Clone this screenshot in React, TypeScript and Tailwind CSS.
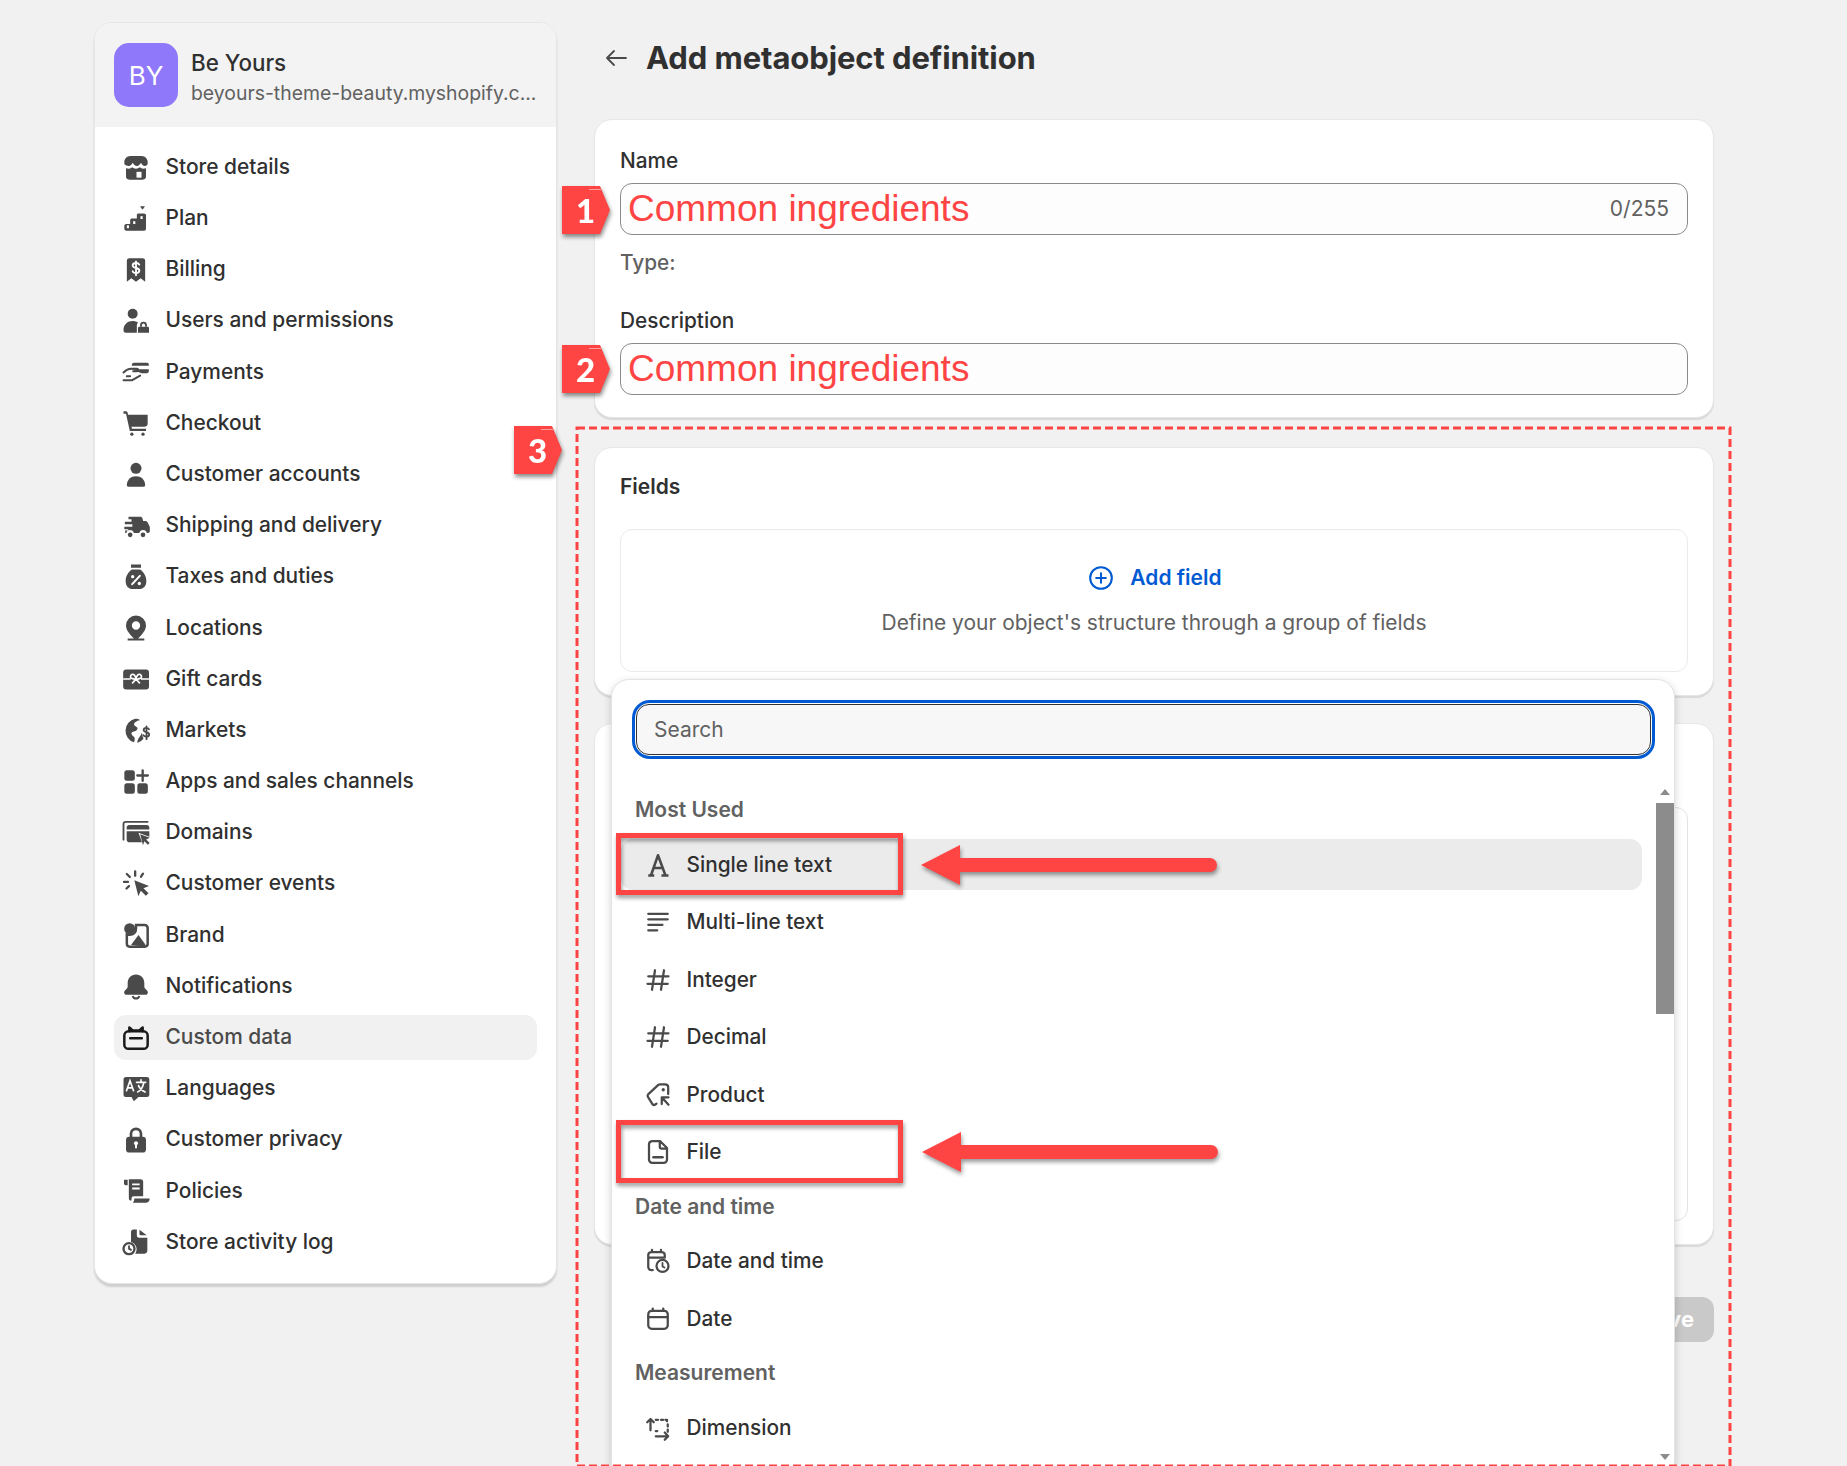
import React from "react";

const W = "#fff";
type IconProps = { children: React.ReactNode; className?: string; viewBox?: string };
const Svg = ({ children, className = "text-[#4a4a4a]", viewBox = "0 0 20 20" }: IconProps) => (
  <svg viewBox={viewBox} fill="currentColor" className={`w-[30px] h-[30px] shrink-0 ${className}`}>
    {children}
  </svg>
);
const S = { fill: "none", stroke: "currentColor", strokeWidth: 1.5, strokeLinecap: "round" as const, strokeLinejoin: "round" as const };

const navIcons: Record<string, React.ReactNode> = {
  "Store details": (
    <>
      <path d="M6.500 2.800h7c1.800 0 3.500 1.700 3.500 3.500v1c0 1-.8 1.500-1.700 1.500-1 0-1.800-.7-2.300-1.900-.6 1.200-1.500 1.900-2.500 1.900s-1.900-.7-2.500-1.900C7.500 8.100 6.700 8.800 5.700 8.800 4.800 8.800 3 8.300 3 7.300v-1c0-1.800 1.700-3.500 3.500-3.500z" />
      <path d="M4 10.200c.5.200 1 .2 1.600.2 .9 0 1.600-.3 2.100-.8.600.5 1.400.8 2.300.8s1.700-.3 2.300-.8c.5.500 1.200.8 2.100.8.600 0 1.100 0 1.600-.2V15a2 2 0 0 1-2 2H6a2 2 0 0 1-2-2z" />
      <rect x="10.300" y="12.300" width="3" height="3.500" fill={W} />
    </>
  ),
  Plan: (
    <>
      <path d="M12.400 2.400h3l-1.500 2z" />
      <path d="M3 14.200c0-.7.500-1.200 1.200-1.200h2.300v-2.200c0-.7.500-1.100 1.100-1.100h2.900V7.800c0-.7.500-1.100 1.100-1.100h3.200c.7 0 1.200.5 1.200 1.100v8c0 .7-.5 1.200-1.200 1.200H4.200C3.500 17 3 16.500 3 15.800z" />
      <rect x="4.500" y="13.800" width="1.300" height="1.700" fill={W} />
      <rect x="8.300" y="11.300" width="1.300" height="1.700" fill={W} />
      <rect x="12.700" y="8.300" width="1.300" height="1.700" fill={W} />
    </>
  ),
  Billing: (
    <>
      <path d="M6 3h8a1.500 1.500 0 0 1 1.500 1.500V17l-2.700-2-2.800 2-2.800-2-2.700 2V4.500A1.500 1.500 0 0 1 6 3z" />
      <path d="M12 6.800c-.3-.6-1.100-1-2-1-1.200 0-2 .6-2 1.500 0 2 4 1 4 3 0 .9-.9 1.500-2 1.500-1 0-1.800-.4-2-1.100M10 4.800v8.400" fill="none" stroke={W} strokeWidth="1.100" strokeLinecap="round" />
    </>
  ),
  "Users and permissions": (
    <>
      <circle cx="8" cy="5.700" r="3" />
      <path d="M2.500 15.500C2.500 12 5 10 8 10c1.200 0 2.300.3 3.200.9-.5.500-.7 1.200-.7 1.900V17H4a1.500 1.500 0 0 1-1.500-1.500z" />
      <path d="M12 13.500h5a.8.8 0 0 1 .8.8V17h-6.600v-2.700a.8.800 0 0 1 .8-.8z" />
      <path d="M13 13.500v-1a1.500 1.500 0 0 1 3 0v1" fill="none" stroke="currentColor" strokeWidth="1.100" />
    </>
  ),
  Payments: (
    <>
      <path d="M7.500 5.800c0-.9.600-1.300 1.300-1.300h7.700c.7 0 1.200.4 1.200 1v.8H7.500z" />
      <path d="M7.200 8.300h10.500v1.300c0 .7-.5 1.100-1.200 1.100h-3.200z" />
      <path d="M2.500 10.300c1.800-1.700 3-2.200 4.500-2.200h3.500c1 0 1.200 1.400 0 1.500H8.300M2.500 15h5l5-2.800" {...S} strokeWidth="1.200" />
      <path d="M4.500 12.600l2-.1" {...S} strokeWidth="1.200" />
    </>
  ),
  Checkout: (
    <>
      <path d="M2.500 3h1.300c.6 0 1 .3 1.200.9L5.200 5H17v5.500c0 1-.7 1.700-1.700 1.700H7.300l.2 1.300H16v1.300H6.300L4 4.500H2.500z" />
      <circle cx="7.500" cy="16.700" r="1" />
      <circle cx="14.200" cy="16.700" r="1" />
    </>
  ),
  "Customer accounts": (
    <>
      <circle cx="10" cy="6" r="3.300" />
      <path d="M4.500 16.200c0-3.400 2.500-5.400 5.500-5.400s5.500 2 5.500 5.400c0 .5-.4.800-.8.800H5.300c-.4 0-.8-.3-.8-.8z" />
    </>
  ),
  "Shipping and delivery": (
    <>
      <path d="M5.500 4.500h7c.7 0 1.200.4 1.400 1l.4 1.500h1.200c.7 0 1.300.4 1.600 1l1 2.200c.2.300.2.600.2.900v1.900c0 .7-.5 1.200-1.200 1.200h-.6a2.300 2.300 0 0 0-4.500 0H8.700a2.300 2.300 0 0 0-4.500 0H3.500v-1.500h1.800V12H3V10.500h4.800V9H3.300V7.500h4V6H5.500z" />
      <circle cx="6.500" cy="15.300" r="1.400" />
      <circle cx="14.200" cy="15.300" r="1.400" />
    </>
  ),
  "Taxes and duties": (
    <>
      <path d="M7 2.500h6v2H7zM7.500 5.500h5c2.200 1.500 3.700 4 3.700 7 0 2.800-1.700 4.700-4.200 4.700H8c-2.500 0-4.200-1.900-4.200-4.700 0-3 1.500-5.500 3.700-7z" />
      <path d="M12.300 9.300l-4.600 5" stroke={W} strokeWidth="1.200" strokeLinecap="round" />
      <circle cx="8" cy="9.800" r="1" fill={W} />
      <circle cx="12" cy="13.900" r="1" fill={W} />
    </>
  ),
  Locations: (
    <path fillRule="evenodd" d="M10 2.500a6 6 0 0 1 6 6c0 3-2.700 5.800-4.800 7.800H15v1.200H5v-1.200h3.800C6.700 14.300 4 11.500 4 8.500a6 6 0 0 1 6-6zm0 3.500a2.500 2.500 0 1 0 0 5 2.500 2.500 0 0 0 0-5z" />
  ),
  "Gift cards": (
    <>
      <rect x="2.300" y="4.300" width="15.500" height="12" rx="1.800" />
      <path d="M2.300 10h4.500M13 10h5M7.500 7.300c1-.6 2.300.8 2.500 2.700-1.800.2-3.500-.4-3.300-1.500.1-.6.400-1 .8-1.200zM12.500 7.300c-1-.6-2.300.8-2.500 2.700 1.800.2 3.500-.4 3.300-1.500-.1-.6-.4-1-.8-1.200zM10 10l-2.300 2.600M10 10l2.300 2.600" fill="none" stroke={W} strokeWidth="1" />
    </>
  ),
  Markets: (
    <>
      <path d="M9.500 2.700c1.100 0 2.200.3 3.100.8-1.600.1-3.500 1-3.700 2.300-.2 1.200 1.100 1.300 1.700 2 .6.600.2 1.500-.5 2-.9.600-3 .4-2.800 1.900.1 1 1.300 1.300 1.700 2.100.5.900.2 2.100-.2 3A7.300 7.300 0 0 1 9.500 2.700zM13.500 11c.2 1.400.6 2.600 1 3.700a7.300 7.300 0 0 1-3.700 2.500c0-1.500.4-2.300 1-3.200.5-.8 1.200-1.600 1.700-3z" />
      <path d="M17.800 8.900c-.3-.5-.9-.8-1.600-.8-.9 0-1.600.5-1.600 1.300 0 1.600 3.300 1 3.300 2.700 0 .8-.8 1.300-1.700 1.300-.8 0-1.500-.3-1.800-.9M16.300 7.300v7.600" fill="none" stroke="currentColor" strokeWidth="1.100" strokeLinecap="round" />
    </>
  ),
  "Apps and sales channels": (
    <>
      <rect x="3" y="3" width="6.300" height="6.300" rx="1.500" />
      <rect x="3" y="10.800" width="6.300" height="6.300" rx="1.500" />
      <rect x="10.800" y="10.800" width="6.300" height="6.300" rx="1.500" />
      <path d="M14 3v6.300M10.800 6.100h6.300" stroke="currentColor" strokeWidth="1.400" strokeLinecap="round" />
    </>
  ),
  Domains: (
    <>
      <path d="M17 3.300H3.800a1.300 1.300 0 0 0-1.300 1.300V14" {...S} strokeWidth="1.100" />
      <path d="M4.400 6.900A1.700 1.700 0 0 1 6.100 5.200h10.200A1.700 1.700 0 0 1 18 6.900v1H4.400z" />
      <path d="M4.400 8.900H18v3.300l-6.500-2.400 2.100 5.800H6.100a1.700 1.700 0 0 1-1.700-1.700z" />
      <path d="M12.500 10.700l5.800 2.200-2.200 1 2.100 2.100-1.100 1.100-2.100-2.100-.8 2.300z" />
    </>
  ),
  "Customer events": (
    <>
      <path d="M9 7.700l8.800 3.500-3.300 1.400 3 3-1.600 1.500-3-3-1.500 3.300z" />
      <path d="M9.500 2.500v2.500M4.500 4l1.800 1.800M14.200 3.800l-1.200 1.800M2.800 8.700h2.400M5.800 11.300l-1.500 1.400" {...S} strokeWidth="1.400" />
    </>
  ),
  Brand: (
    <>
      <circle cx="6.200" cy="6.200" r="3.300" />
      <path d="M10 4h5.200c1 0 1.800.8 1.800 1.800v9.500c0 1-.8 1.700-1.800 1.700H6.200c-1 0-1.700-.7-1.700-1.700V9.600c.5.200 1 .3 1.700.3 2.300 0 3.800-1.600 3.800-3.700z" fill="none" stroke="currentColor" strokeWidth="1.500" />
      <path d="M7 16l4.500-6 4 5.500v1.500z" />
    </>
  ),
  Notifications: (
    <>
      <path d="M10 2.500c3 0 5 2.300 5 5.200v2c0 .8.500 1.400 1.200 2 .7.600.9 1.100.9 1.600 0 .8-.7 1.400-1.500 1.400H4.400c-.8 0-1.500-.6-1.500-1.400 0-.5.200-1 .9-1.600.7-.6 1.200-1.200 1.200-2v-2c0-2.900 2-5.200 5-5.200z" />
      <path d="M8 15.500a2.100 2.100 0 0 0 4 0" fill="none" stroke="currentColor" strokeWidth="1.200" />
    </>
  ),
  "Custom data": (
    <>
      <rect x="3" y="6" width="14" height="10.500" rx="2.500" fill="none" stroke="#1a1a1a" strokeWidth="1.500" />
      <path d="M6 6V3.700l2 1.800M14 6V3.700l-2 1.800M8 5.500h4M6.500 10.200h7" fill="none" stroke="#1a1a1a" strokeWidth="1.500" strokeLinecap="round" strokeLinejoin="round" />
    </>
  ),
  Languages: (
    <>
      <path d="M4 2.800h12.500A1.500 1.500 0 0 1 18 4.300v9a1.500 1.500 0 0 1-1.500 1.500h-5L8.700 17.300 7.300 14.800H4a1.500 1.500 0 0 1-1.500-1.500v-9A1.500 1.500 0 0 1 4 2.800z" />
      <path d="M4.300 11l2.100-6 2.100 6M5 9.300h2.800M10.300 6h5.500M13 4.500V6M11 11.800c2-1 3.200-3 3.700-5.800M11.500 8c.7 1.800 2 3 4 3.800" fill="none" stroke={W} strokeWidth="1" strokeLinecap="round" />
    </>
  ),
  "Customer privacy": (
    <>
      <path d="M7 8.500V6.300a3 3 0 0 1 6 0v2.200" fill="none" stroke="currentColor" strokeWidth="1.600" />
      <rect x="4" y="8" width="12" height="9.500" rx="2" />
      <circle cx="10" cy="12" r="1.200" fill={W} />
      <path d="M10 12.500v2" stroke={W} strokeWidth="1.200" strokeLinecap="round" />
    </>
  ),
  Policies: (
    <>
      <path d="M2.800 3.200h2.200v3.300H3.800A1 1 0 0 1 2.800 5.500z" />
      <path d="M5.700 3h7.100c.9 0 1.500.7 1.500 1.500v8.700H8.800c-1 0-1.500.5-1.500 1.500v1h-.3c-.8 0-1.300-.6-1.300-1.400z" />
      <path d="M9 14.500h9.200c0 1.500-.8 2.500-2 2.500H8c.7-.5 1-1.500 1-2.500z" />
      <path d="M7.700 6h4.500M7.700 8.500h4.500" stroke={W} strokeWidth="1.100" />
    </>
  ),
  "Store activity log": (
    <>
      <path d="M7 4a1.500 1.500 0 0 1 1.500-1.500h2V6a1.500 1.500 0 0 0 1.500 1.500h4.800v7.800c0 .9-.7 1.700-1.700 1.700H9.500a4.500 4.500 0 0 0-2.500-7z" />
      <path d="M12.100 2.700l4.300 3.300h-3.700a.6.6 0 0 1-.6-.6z" />
      <circle cx="5.800" cy="14" r="3.300" fill="none" stroke="currentColor" strokeWidth="1.400" />
      <path d="M5.800 12.500V14l1.200.7" fill="none" stroke="currentColor" strokeWidth="1.100" strokeLinecap="round" />
    </>
  ),
};

const navItems = Object.keys(navIcons);

const fieldIcons: Record<string, React.ReactNode> = {
  "Single line text": <path d="M3.500 17h4M12.300 17h4.700M5.300 17L10 3.500 15 17M7 12h6" {...S} strokeWidth="1.700" strokeLinecap="butt" />,
  "Multi-line text": <path d="M3.500 4.500h13M3.500 8.200h13M3.500 11.900h9.500M3.500 15.500h6" {...S} strokeWidth="1.500" />,
  Integer: <path d="M8 3.500L6 16.500M14 3.500l-2 13M3.500 7.500h13.500M3 12.500h13.500" {...S} />,
  Decimal: <path d="M8 3.500L6 16.500M14 3.500l-2 13M3.500 7.500h13.500M3 12.500h13.500" {...S} />,
  Product: (
    <>
      <path d="M9 15.800l-1 .7c-.6.300-1.200.200-1.600-.3L3.300 11.300c-.4-.6-.3-1.200.1-1.700l6.800-6.300c.4-.3.700-.4 1.200-.4h3.300c1.200 0 2.100.8 2.100 2v4.500" {...S} />
      <circle cx="13.500" cy="6.500" r="1.100" />
      <path d="M12.500 11.500L12.500 16M12.500 11.500H17M12.700 11.700L17 16.500" {...S} />
    </>
  ),
  File: (
    <>
      <path d="M6 2.800h5.500L16 7.300V15a2.200 2.200 0 0 1-2.200 2.200H6.200A2.200 2.200 0 0 1 4 15V5a2.200 2.200 0 0 1 2-2.200zM11.200 3v3.500c0 .7.500 1.200 1.200 1.200H16" {...S} />
      <path d="M7 13.500h6" {...S} strokeWidth="1.800" />
    </>
  ),
  "Date and time": (
    <>
      <path d="M6.500 16H5.500A2 2 0 0 1 3.500 14V6a2 2 0 0 1 2-2h7a2 2 0 0 1 2 2v1.500M3.500 7.800h11M6 4V2.500M12 4V2.500" {...S} />
      <circle cx="13" cy="13.300" r="4" {...S} />
      <path d="M13 11.300v2.300l1.300.8" {...S} strokeWidth="1.200" />
    </>
  ),
  Date: (
    <>
      <rect x="3.500" y="4.500" width="13" height="12" rx="2.300" {...S} />
      <path d="M3.500 8.700h13M6.500 4.500V3M13.500 4.500V3" {...S} />
    </>
  ),
  Dimension: (
    <>
      <path d="M5 11.500V4M2.800 6.200L5 4l2.200 2.200M8.500 15.500h8M14.500 13l2.300 2.500-2.300 2.300" {...S} />
      <path d="M8.500 4.500h1.500M12 4.500h1.500M15 4.500h1v1M16.500 7.500v1.500M16.500 11v1.500M8.500 12h1" {...S} />
    </>
  ),
};

function FieldRow({ label, active }: { label: string; active?: boolean }) {
  return (
    <div className={`flex items-center h-[51px] pl-[22px] gap-[13.500px] rounded-[12px] text-[20.800px] font-[450] text-[#303030] ${active ? "bg-[#ebebeb]" : ""}`}>
      <Svg className="text-[#4a4a4a]">{fieldIcons[label]}</Svg>
      <span className="-translate-y-[0.500px]">{label}</span>
    </div>
  );
}

function Section({ title, items, activeFirst }: { title: string; items: string[]; activeFirst?: boolean }) {
  return (
    <div className="mb-[14px]">
      <div className="h-[30px] mb-[14px] pl-[14px] flex items-center text-[21px] font-semibold text-[#616161]">{title}</div>
      <div className="flex flex-col gap-[6.500px]">
        {items.map((i, idx) => (
          <FieldRow key={i} label={i} active={activeFirst && idx === 0} />
        ))}
      </div>
    </div>
  );
}

function Badge({ n, className }: { n: string; className: string }) {
  return (
    <div className={`absolute w-[48px] h-[48px] drop-shadow-[1px_3px_2px_rgba(0,0,0,0.45)] ${className}`}>
      <div className="relative w-full h-full bg-[#ff4444] [clip-path:polygon(0_0,38px_0,48px_24px,38px_48px,0_48px)] flex items-center pl-[14px]">
        <span className="text-white text-[33px] font-black leading-none font-['Lato',sans-serif]">{n}</span>
        <div className="absolute left-[27px] top-[3px] w-[12px] h-[1px] bg-[#ff9d9d]" />
      </div>
    </div>
  );
}

function Arrow({ className }: { className: string }) {
  return (
    <svg viewBox="0 0 299 44" className={`absolute w-[299px] h-[44px] drop-shadow-[1px_3px_2px_rgba(0,0,0,0.4)] ${className}`}>
      <path d="M0 22L39 2V15H289a7 7 0 0 1 0 14H39V42z" fill="#ff4444" />
    </svg>
  );
}

function Card({ className, children }: { className: string; children?: React.ReactNode }) {
  return (
    <div className={`bg-white rounded-[18px] border border-[#e6e6e6] shadow-[0_2px_1px_rgba(0,0,0,0.1)] px-[25px] ${className}`}>{children}</div>
  );
}

const RedText = () => (
  <span className="text-[37px] text-[#ff4444] font-['Liberation_Sans',sans-serif] leading-none -translate-y-[1px]">Common ingredients</span>
);

export default function App() {
  return (
    <div className="relative h-[1466px] overflow-hidden bg-[#f1f1f1] font-['Inter',sans-serif] text-[#303030] pl-[94px] pt-[22px] flex gap-[37px] items-start">
      <aside className="w-[463px] shrink-0 bg-white rounded-[18px] border border-[#e6e6e6] shadow-[0_3px_2px_rgba(0,0,0,0.14)] overflow-hidden">
        <div className="h-[104px] bg-[#f3f3f3] flex items-center px-[19px] gap-[13px]">
          <div className="w-[64px] h-[64px] rounded-[15px] bg-[#8f78fa] text-white text-[26px] flex items-center justify-center shrink-0 pt-[1px]">BY</div>
          <div className="min-w-0 flex-1 pt-[5px]">
            <div className="text-[22.400px] font-medium text-[#303030] leading-[31px]">Be Yours</div>
            <div className="text-[19.400px] text-[#616161] leading-[31px] whitespace-nowrap">beyours-theme-beauty.myshopify.c...</div>
          </div>
        </div>
        <nav className="flex flex-col gap-[6.190px] px-[19px] py-[18px]">
          {navItems.map((n) => (
            <div key={n} className={`flex items-center h-[45px] pl-[7px] gap-[14.500px] rounded-[12px] text-[20.900px] font-[450] ${n === "Custom data" ? "bg-[#f1f1f1] text-[#4a4a4a]" : "text-[#303030]"}`}>
              <Svg viewBox="1 1 18 18">{navIcons[n]}</Svg>
              <span className="-translate-y-[1px]">{n}</span>
            </div>
          ))}
        </nav>
      </aside>

      <main className="w-[1120px] shrink-0">
        <div className="h-[72px] mb-[25px] flex items-center">
          <svg viewBox="0 0 24 24" className="w-[24px] h-[24px] ml-[10px] mr-[18px] text-[#4a4a4a]" fill="none" stroke="currentColor" strokeWidth="1.800" strokeLinecap="round" strokeLinejoin="round">
            <path d="M22 12H3M10 5l-7 7 7 7" />
          </svg>
          <h1 className="text-[31px] font-bold text-[#303030] tracking-[-0.1px]">Add metaobject definition</h1>
        </div>

        <Card className="h-[299px] pt-[25px] mb-[29px]">
          <div className="h-[30px] mb-[8px] flex items-center text-[20.800px] font-[450] translate-y-[1px]">Name</div>
          <div className="h-[52px] rounded-[12px] border border-[#8a8a8a] bg-[#fdfdfd] flex items-center justify-between pl-[7px] pr-[18px]">
            <RedText />
            <span className="text-[21px] text-[#616161]">0/255</span>
          </div>
          <div className="h-[30px] mt-[13px] flex items-center text-[20.800px] font-[450] text-[#616161]">Type:</div>
          <div className="h-[30px] mt-[27px] mb-[8px] flex items-center text-[20.800px] font-[450] translate-y-[1px]">Description</div>
          <div className="h-[52px] rounded-[12px] border border-[#8a8a8a] bg-[#fdfdfd] flex items-center pl-[7px]">
            <RedText />
          </div>
        </Card>

        <Card className="h-[249px] pt-[24px] mb-[27px]">
          <div className="h-[30px] mb-[27px] flex items-center text-[21px] font-semibold">Fields</div>
          <div className="h-[143px] rounded-[12px] border border-[#ebebeb] flex flex-col items-center pt-[33px]">
            <div className="flex items-center gap-[14px] h-[30px] text-[21px] font-semibold text-[#005bd3]">
              <svg viewBox="0 0 20 20" className="w-[30px] h-[30px]" fill="none" stroke="currentColor" strokeWidth="1.400" strokeLinecap="round">
                <circle cx="10" cy="10" r="7.200" />
                <path d="M10 6.800v6.400M6.800 10h6.400" />
              </svg>
              <span>Add field</span>
            </div>
            <div className="mt-[15px] h-[30px] flex items-center text-[20.950px] text-[#616161]">Define your object's structure through a group of fields</div>
          </div>
        </Card>

        <Card className="h-[522px] pt-[83px] mb-[52px]">
          <div className="h-[414px] rounded-[12px] border border-[#e3e3e3]" />
        </Card>

        <div className="flex justify-end">
          <div className="h-[45px] px-[20px] rounded-[12px] bg-[#c9c9c9] text-white text-[22px] font-bold flex items-center">Save</div>
        </div>
      </main>

      {/* Opened type picker, lying over the cards */}
      <div className="absolute left-[611px] top-[679px] w-[1064px] h-[800px] bg-white rounded-[18px] border border-[#e3e3e3] shadow-[0_3px_8px_rgba(0,0,0,0.18)] pl-[9px] pt-[20px]">
        <div className="ml-[11px] w-[1023px] h-[59px] rounded-[18px] border-[3px] border-[#005bd3] p-[1px]">
          <div className="h-full rounded-[13px] border border-[#333] bg-[#f7f7f7] flex items-center pl-[17px] text-[21px] text-[#616161]">Search</div>
        </div>
        <div className="w-[1021px] mt-[36px]">
          <Section title="Most Used" items={["Single line text", "Multi-line text", "Integer", "Decimal", "Product", "File"]} activeFirst />
          <Section title="Date and time" items={["Date and time", "Date"]} />
          <Section title="Measurement" items={["Dimension"]} />
        </div>
        <div className="absolute left-[1044px] top-[123px] w-[18px] h-[211px] bg-[#8c8c8c]" />
        <div className="absolute left-[1048px] top-[109px] w-0 h-0 border-x-[5px] border-x-transparent border-b-[6px] border-b-[#8c8c8c]" />
        <div className="absolute left-[1048px] top-[774px] w-0 h-0 border-x-[5px] border-x-transparent border-t-[6px] border-t-[#8c8c8c]" />
      </div>

      {/* Annotations */}
      <svg className="absolute left-[575px] top-[426px] w-[1157px] h-[1042px] pointer-events-none" viewBox="0 0 1157 1042" fill="none">
        <rect x="2" y="2" width="1153" height="1038" stroke="#ff4444" strokeWidth="3" strokeDasharray="8 4" />
      </svg>
      <Badge n="1" className="left-[562px] top-[186px]" />
      <Badge n="2" className="left-[562px] top-[345px]" />
      <Badge n="3" className="left-[514px] top-[426px]" />
      <div className="absolute left-[616px] top-[833px] w-[287px] h-[62px] border-[5px] border-[#ff4444] drop-shadow-[1px_3px_2px_rgba(0,0,0,0.4)]" />
      <div className="absolute left-[616px] top-[1120px] w-[287px] h-[63px] border-[5px] border-[#ff4444] drop-shadow-[1px_3px_2px_rgba(0,0,0,0.4)]" />
      <Arrow className="left-[921px] top-[843px]" />
      <Arrow className="left-[922px] top-[1130px]" />
    </div>
  );
}
